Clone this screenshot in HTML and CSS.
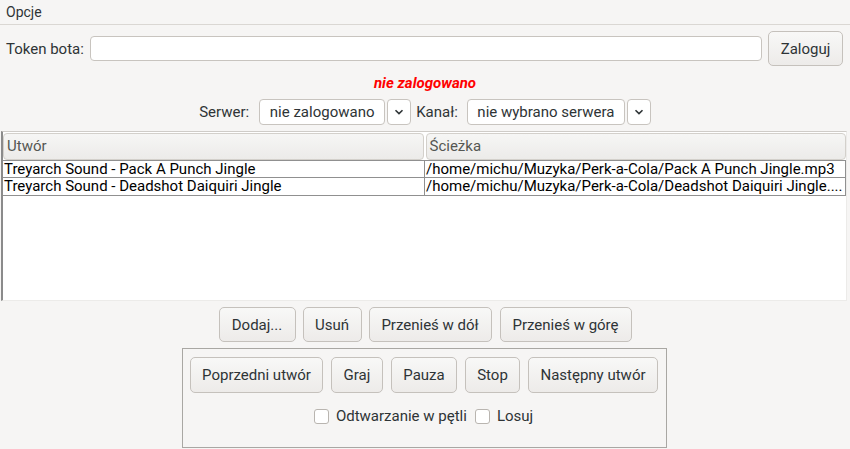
FILE: index.html
```html
<!DOCTYPE html>
<html lang="pl">
<head>
<meta charset="utf-8">
<title>Opcje</title>
<link rel="stylesheet" href="styles.css">
</head>
<body>
<div class="menubar">Opcje</div>
<div class="token-row">
  <label class="token-label">Token bota:</label>
  <input class="token-input" type="text">
  <button class="btn btn-login">Zaloguj</button>
</div>
<div class="status">nie zalogowano</div>
<div class="combo-row">
  <span class="lbl lbl-server">Serwer:</span>
  <div class="combo combo-server">nie zalogowano</div>
  <div class="combo-btn"><svg width="10" height="6" viewBox="0 0 10 6"><path d="M1.5 1.2 L5 4.6 L8.5 1.2" fill="none" stroke="#2e3436" stroke-width="1.6"/></svg></div>
  <span class="lbl lbl-channel">Kanał:</span>
  <div class="combo combo-channel">nie wybrano serwera</div>
  <div class="combo-btn"><svg width="10" height="6" viewBox="0 0 10 6"><path d="M1.5 1.2 L5 4.6 L8.5 1.2" fill="none" stroke="#2e3436" stroke-width="1.6"/></svg></div>
</div>
<div class="list">
  <div class="list-head">
    <div class="head-cell">Utwór</div>
    <div class="head-cell">Ścieżka</div>
  </div>
  <div class="list-row">
    <div class="cell">Treyarch Sound - Pack A Punch Jingle</div>
    <div class="cell">/home/michu/Muzyka/Perk-a-Cola/Pack A Punch Jingle.mp3</div>
  </div>
  <div class="list-row">
    <div class="cell">Treyarch Sound - Deadshot Daiquiri Jingle</div>
    <div class="cell">/home/michu/Muzyka/Perk-a-Cola/Deadshot Daiquiri Jingle....</div>
  </div>
</div>
<div class="list-buttons">
  <button class="btn b-add">Dodaj...</button>
  <button class="btn b-del">Usuń</button>
  <button class="btn b-down">Przenieś w dół</button>
  <button class="btn b-up">Przenieś w górę</button>
</div>
<div class="player">
  <div class="player-buttons">
    <button class="btn pb b-prev">Poprzedni utwór</button>
    <button class="btn pb b-play">Graj</button>
    <button class="btn pb b-pause">Pauza</button>
    <button class="btn pb b-stop">Stop</button>
    <button class="btn pb b-next">Następny utwór</button>
  </div>
  <div class="checks">
    <span class="check"><span class="box"></span>Odtwarzanie w pętli</span>
    <span class="check"><span class="box"></span>Losuj</span>
  </div>
</div>
</body>
</html>
```
FILE: styles.css
```css
* { box-sizing: border-box; }
html, body { margin: 0; padding: 0; }
body {
  width: 850px;
  height: 449px;
  overflow: hidden;
  background: #f6f5f4;
  font-family: Roboto, "Liberation Sans", sans-serif;
  font-size: 15px;
  color: #2e3436;
}
.menubar {
  height: 25px;
  line-height: 24px;
  padding-left: 6px;
  border-bottom: 1px solid #dad7d3;
  font-size: 14px;
}
.token-row {
  display: flex;
  align-items: center;
  padding: 6px 7px 0 6px;
}
.token-label { width: 84px; }
.token-input {
  flex: 1;
  height: 25px;
  margin-right: 6px;
  border: 1px solid #c8c4bf;
  border-radius: 4px;
  background: #fff;
  outline: none;
}
.btn {
  font-family: inherit;
  font-size: 15px;
  color: #2e3436;
  height: 35px;
  padding: 0;
  border: 1px solid #c5c1bc;
  border-radius: 5px;
  background: linear-gradient(#f8f8f7, #edebe9);
}
.btn-login { width: 75px; }
.status {
  margin-top: 7px;
  height: 20px;
  line-height: 20px;
  text-align: center;
  color: #ff0000;
  font-weight: bold;
  font-style: italic;
  font-size: 15px;
}
.combo-row {
  margin-top: 6px;
  display: flex;
  justify-content: center;
  align-items: center;
  height: 26px;
}
.lbl { color: #2e3436; }
.lbl-server { margin-right: 10px; }
.lbl-channel { margin: 0 9px 0 5px; }
.combo {
  height: 26px;
  line-height: 24px;
  border: 1px solid #c8c4bf;
  border-radius: 4px;
  background: #fff;
  text-align: center;
}
.combo-server { width: 126px; }
.combo-channel { width: 158px; }
.combo-btn {
  width: 24px;
  height: 26px;
  margin-left: 2px;
  border: 1px solid #c8c4bf;
  border-radius: 4px;
  background: #fff;
  display: flex;
  align-items: center;
  justify-content: center;
}
.list {
  margin: 6px 3px 0 1px;
  height: 170px;
  background: #fff;
  border-top: 1px solid #cfccc8;
  border-left: 2px solid #8b8b8b;
  border-right: 1px solid #ecebe9;
  border-bottom: 1px solid #ecebe9;
  padding-top: 1px;
}
.list-head {
  display: flex;
  height: 27px;
}
.head-cell {
  flex: 1;
  height: 27px;
  line-height: 25px;
  padding-left: 3px;
  margin-right: 2px;
  border: 1px solid #d3d0cb;
  border-radius: 4px;
  background: linear-gradient(#f6f6f5, #ecebe9);
  color: #555753;
  font-size: 15px;
}
.head-cell:last-child { margin-right: 0; }
.list-row {
  display: flex;
  height: 18px;
  border-bottom: 1px solid #909090;
}
.list-head + .list-row { border-top: 1px solid #909090; }
.cell {
  flex: 1;
  line-height: 17px;
  padding-left: 1px;
  color: #000;
  font-size: 15px;
  white-space: nowrap;
  overflow: hidden;
  border-right: 1px solid #909090;
}
.cell:first-child { flex: 0 0 422px; }
.list-buttons {
  margin-top: 6px;
  display: flex;
  justify-content: center;
  gap: 7px;
}
.b-add { width: 77px; }
.b-del { width: 59px; }
.b-down { width: 123px; margin-right: 1px; }
.b-up { width: 132px; }
.player {
  margin: 6px 0 0 182px;
  width: 485px;
  height: 100px;
  border: 1px solid #a9a7a3;
  padding: 8px 7px 0 7px;
}
.player-buttons {
  display: flex;
  gap: 8px;
}
.pb { height: 36px; }
.b-prev { width: 133px; }
.b-play { width: 52px; }
.b-pause { width: 66px; }
.b-stop { width: 55px; }
.b-next { width: 130px; }
.checks {
  margin-top: 8px;
  display: flex;
  justify-content: center;
  gap: 8px;
  height: 30px;
  align-items: center;
  padding-right: 2px;
}
.check {
  display: flex;
  align-items: center;
}
.box {
  width: 15px;
  height: 15px;
  border: 1px solid #b9b5b0;
  border-radius: 3px;
  background: #fff;
  margin-right: 7px;
}
```
